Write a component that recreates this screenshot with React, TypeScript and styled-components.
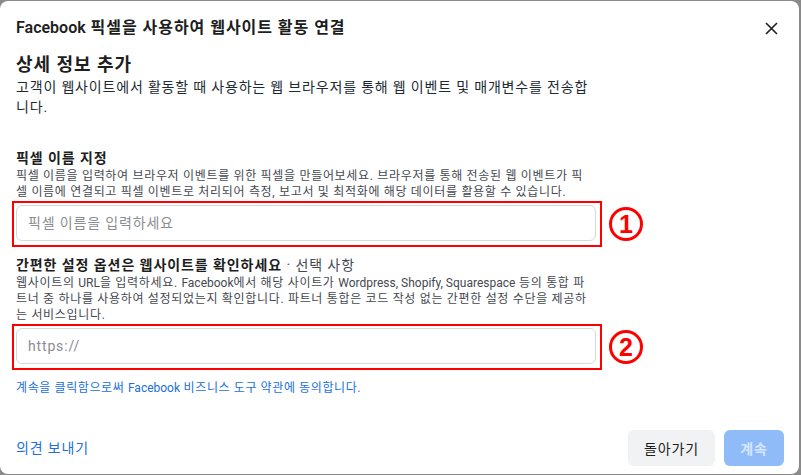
import React from "react";
import styled, { createGlobalStyle } from "styled-components";

const Global = createGlobalStyle`
  html, body { margin: 0; padding: 0; background: #8a8a8a; }
  body { font-family: Roboto, "Noto Sans CJK KR", sans-serif; }
  * { box-sizing: border-box; }
`;

const Modal = styled.div`
  margin-top: 1px;
  width: 799px;
  height: 473px;
  background: #fff;
  border-radius: 8px;
  display: flex;
  flex-direction: column;
  color: #1c2b33;
  letter-spacing: 0.96px;
`;

const Latin = styled.span`
  letter-spacing: 0;
`;

const Run = styled.span``;

const Header = styled.div`
  display: flex;
  align-items: center;
  justify-content: space-between;
  padding: 15px 16px 0 16px;
`;

const Title = styled.h1`
  margin: 0;
  font-size: 16px;
  line-height: 22px;
  font-weight: 600;
  color: #1c1e21;
`;

const CloseButton = styled.button`
  width: 24px;
  height: 24px;
  border: 0;
  padding: 0;
  background: transparent;
  display: flex;
  align-items: center;
  justify-content: center;
  cursor: pointer;
  color: #1c1e21;
`;

const Body = styled.div`
  padding: 0 16px;
  display: flex;
  flex-direction: column;
`;

const Heading = styled.h2`
  margin: 13px 0 0;
  font-size: 18px;
  line-height: 24px;
  font-weight: 700;
  color: #1c1e21;
`;

const Lead = styled.p`
  margin: 0;
  width: 576px;
  font-size: 14px;
  line-height: 20px;
  letter-spacing: 0.82px;
  color: #1c2b33;
`;

const SectionTitle = styled.h3<{ $top: number }>`
  margin: ${(p) => p.$top}px 0 0;
  font-size: 14px;
  line-height: 20px;
  font-weight: 700;
  letter-spacing: 0.92px;
  color: #1c1e21;
`;

const Optional = styled.span`
  font-weight: 400;
  color: #444950;
`;

const Help = styled.p`
  margin: 0;
  width: 576px;
  font-size: 12px;
  line-height: 16px;
  letter-spacing: 0.68px;
  color: #444950;
`;

const FieldRow = styled.div<{ $top: number }>`
  display: flex;
  align-items: center;
  gap: 7px;
  margin: ${(p) => p.$top}px 0 0 -4px;
`;

const Highlight = styled.div`
  border: 2px solid #f00;
  padding: 2px 4px 4px 2px;
`;

const Input = styled.input`
  display: block;
  width: 580px;
  height: 36px;
  border: 1px solid #d5d8dc;
  border-radius: 6px;
  padding: 0 11px;
  font-family: Roboto, "Noto Sans CJK KR", sans-serif;
  font-size: 14px;
  letter-spacing: 0.84px;
  color: #1c2b33;
  outline: none;
  &::placeholder { color: #8a8d91; }
`;

const Badge = styled.div`
  width: 34px;
  height: 34px;
  border: 3px solid #f00;
  border-radius: 50%;
  display: flex;
  align-items: center;
  justify-content: center;
  color: #f00;
  font-family: "Liberation Sans", Arial, sans-serif;
  font-weight: 700;
  font-size: 25px;
  line-height: 1;
  letter-spacing: 0;
`;

const Terms = styled.p`
  margin: 10px 0 0;
  font-size: 12px;
  line-height: 16px;
  letter-spacing: 0.6px;
  color: #216fdb;
`;

const Footer = styled.div`
  margin-top: auto;
  display: flex;
  align-items: center;
  justify-content: space-between;
  padding: 0 15px 8px 16px;
`;

const FeedbackLink = styled.a`
  font-size: 14px;
  line-height: 20px;
  letter-spacing: 0.84px;
  color: #216fdb;
  text-decoration: none;
  cursor: pointer;
`;

const Actions = styled.div`
  display: flex;
  gap: 9px;
`;

const Button = styled.button<{ $primary?: boolean }>`
  height: 36px;
  padding: 0 14px;
  min-width: ${(p) => (p.$primary ? 60 : 87)}px;
  border: 0;
  border-radius: 6px;
  font-family: Roboto, "Noto Sans CJK KR", sans-serif;
  font-size: 14px;
  letter-spacing: 0.84px;
  font-weight: ${(p) => (p.$primary ? 700 : 400)};
  background: ${(p) => (p.$primary ? "#8fbcf8" : "#f1f2f3")};
  color: ${(p) => (p.$primary ? "#d6e7fd" : "#1c1e21")};
`;

export default function App() {
  return (
    <>
      <Global />
      <Modal>
        <Header>
          <Title>
            <Latin>Facebook</Latin> 픽셀을 사용하여 웹사이트 활동 연결
          </Title>
          <CloseButton aria-label="닫기">
            <svg width="13" height="13" viewBox="0 0 13 13">
              <path d="M1 1 L12 12 M12 1 L1 12" stroke="currentColor" strokeWidth="1.6" fill="none" />
            </svg>
          </CloseButton>
        </Header>
        <Body>
          <Heading>상세 정보 추가</Heading>
          <Lead>
            고객이 웹사이트에서 활동할 때 사용하는 웹 브라우저를 통해 웹 이벤트 및 매개변수를 전송합니다.
          </Lead>

          <SectionTitle $top={31}>픽셀 이름 지정</SectionTitle>
          <Help>
            픽셀 이름을 입력하여 브라우저 이벤트를 위한 픽셀을 만들어보세요. 브라우저를 통해 전송된 웹 이벤트가 픽셀 이름에 연결되고 픽셀 이벤트로 처리되어 측정, 보고서 및 최적화에 해당 데이터를 활용할 수 있습니다.
          </Help>
          <FieldRow $top={1}>
            <Highlight>
              <Input placeholder="픽셀 이름을 입력하세요" />
            </Highlight>
            <Badge>1</Badge>
          </FieldRow>

          <SectionTitle $top={8}>
            간편한 설정 옵션은 웹사이트를 확인하세요 <Optional>· 선택 사항</Optional>
          </SectionTitle>
          <Help>
            <Run>웹사이트의 </Run>
            <Latin>URL</Latin>
            <Run>을 입력하세요. </Run>
            <Latin>Facebook</Latin>
            <Run>에서 해당 사이트가 </Run>
            <Latin>Wordpress, Shopify, Squarespace</Latin>
            <Run> 등의 통합 파</Run>
            <Run>트너 중 하나를 사용하여 설정되었는지 확인합니다. 파트너 통합은 코드 작성 없는 간편한 설정 수단을 제공하</Run>
            <Run>는 서비스입니다.</Run>
          </Help>
          <FieldRow $top={1}>
            <Highlight>
              <Input placeholder="https://" />
            </Highlight>
            <Badge>2</Badge>
          </FieldRow>

          <Terms>
            계속을 클릭함으로써 <Latin>Facebook</Latin> 비즈니스 도구 약관에 동의합니다.
          </Terms>
        </Body>
        <Footer>
          <FeedbackLink>의견 보내기</FeedbackLink>
          <Actions>
            <Button>돌아가기</Button>
            <Button $primary disabled>
              계속
            </Button>
          </Actions>
        </Footer>
      </Modal>
    </>
  );
}
